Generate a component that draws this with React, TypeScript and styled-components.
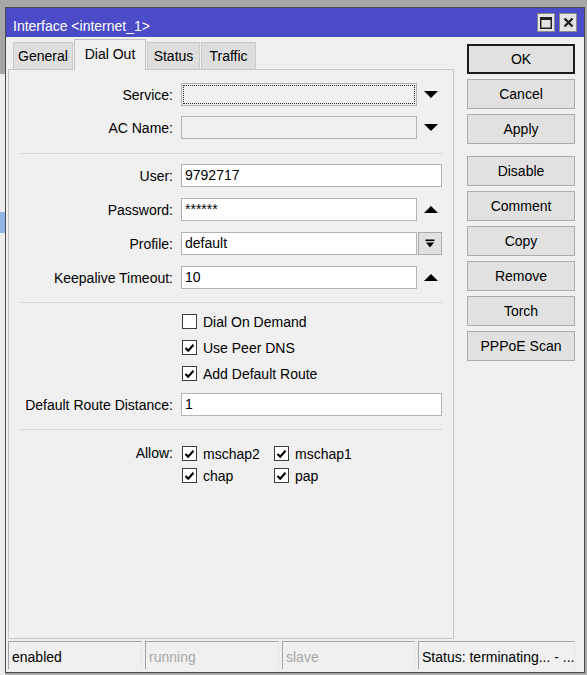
import React from 'react';
import styled, {createGlobalStyle, css} from 'styled-components';

const GlobalStyle = createGlobalStyle`
  html, body {
    margin: 0;
    padding: 0;
  }
  body {
    background: #a7a7a7;
    font-family: "Liberation Sans", Arial, sans-serif;
    font-size: 14px;
    color: #000;
  }
`;

const Page = styled.div`
  width: 587px;
  height: 675px;
  display: flex;
  align-items: flex-start;
  overflow: hidden;
`;

const Backdrop = styled.div`
  width: 5px;
  align-self: stretch;
  display: flex;
  flex-direction: column;
`;

const BackdropBlock = styled.div<{ $h: number; $bg: string }>`
  height: ${p => p.$h}px;
  background: ${p => p.$bg};
  flex-shrink: 0;
`;

const Window = styled.div`
  margin-top: 7px;
  width: 580px;
  height: 666px;
  box-sizing: border-box;
  border: 1px solid #4a4a4a;
  background: #f0f0f0;
  display: flex;
  flex-direction: column;
`;

const TitleBar = styled.div`
  height: 29px;
  flex-shrink: 0;
  background: #4b4bc7;
  display: flex;
  align-items: center;
  padding: 0 7px 0 7px;
  gap: 4px;
`;

const Title = styled.div`
  flex: 1;
  color: #fff;
  padding-top: 6px;
  white-space: nowrap;
`;

const CaptionButton = styled.div`
  width: 18px;
  height: 19px;
  box-sizing: border-box;
  background: #e4e4e4;
  border: 1px solid #8a8a8a;
  display: flex;
  align-items: center;
  justify-content: center;
`;

const Body = styled.div`
  flex: 1;
  display: grid;
  grid-template-columns: 446px 108px;
  grid-template-rows: 1fr 28px;
  column-gap: 13px;
  row-gap: 2px;
  padding: 2px 6px 3px 2px;
  min-height: 0;
`;

const LeftColumn = styled.div`
  display: flex;
  flex-direction: column;
  min-height: 0;
`;

const TabStrip = styled.div`
  height: 30px;
  display: flex;
  align-items: flex-end;
  gap: 1px;
  padding-left: 5px;
  flex-shrink: 0;
`;

const Tab = styled.div<{ $w: number; $active?: boolean }>`
  width: ${p => p.$w}px;
  height: 27px;
  box-sizing: border-box;
  display: flex;
  align-items: center;
  justify-content: center;
  background: #dedede;
  border: 1px solid #cacaca;
  border-bottom: none;
  ${p => p.$active && css`
    height: 31px;
    margin-bottom: -1px;
    background: #f0f0f0;
    border-color: #c2c2c2;
    padding-bottom: 3px;
    position: relative;
    z-index: 1;
  `}
`;

const Panel = styled.div`
  flex: 1;
  border: 1px solid #c8c8c8;
  background: #f0f0f0;
  padding-top: 13px;
  display: flex;
  flex-direction: column;
`;

const Group = styled.div<{ $gap: number }>`
  display: flex;
  flex-direction: column;
  gap: ${p => p.$gap}px;
`;

const Row = styled.div<{ $mt?: number }>`
  display: flex;
  align-items: center;
  height: 23px;
  margin-top: ${p => p.$mt ?? 0}px;
`;

const Label = styled.div`
  width: 164px;
  margin-right: 8px;
  text-align: right;
  white-space: nowrap;
`;

const TextBox = styled.div<{ $w: number; $muted?: boolean; $focused?: boolean }>`
  width: ${p => p.$w}px;
  height: 23px;
  box-sizing: border-box;
  border: 1px solid #b3b3b3;
  background: ${p => (p.$muted ? '#f0f0f0' : '#fff')};
  padding-left: 3px;
  line-height: 21px;
  white-space: nowrap;
  overflow: hidden;
  ${p => p.$focused && css`
    outline: 1px dotted #222;
    outline-offset: -3px;
  `}
`;

const ArrowSlot = styled.div`
  width: 25px;
  padding-left: 2px;
  box-sizing: border-box;
  display: flex;
  align-items: center;
  justify-content: center;
`;

const ComboButton = styled.div`
  width: 24px;
  height: 23px;
  margin-left: 1px;
  box-sizing: border-box;
  background: #e1e1e1;
  border: 1px solid #adadad;
  display: flex;
  align-items: center;
  justify-content: center;
`;

const Separator = styled.div<{ $mt: number; $mb: number }>`
  height: 1px;
  width: 422px;
  margin: ${p => p.$mt}px 0 ${p => p.$mb}px 11px;
  background: #d8d8d8;
`;

const CheckRow = styled.div`
  display: flex;
  align-items: center;
  height: 21px;
  padding-left: 173px;
`;

const CheckItem = styled.div`
  display: flex;
  align-items: center;
  gap: 6px;
  height: 21px;
  white-space: nowrap;
`;

const Box = styled.div`
  width: 15px;
  height: 15px;
  box-sizing: border-box;
  border: 1px solid #3c3c3c;
  background: #fff;
  display: flex;
  align-items: center;
  justify-content: center;
  flex-shrink: 0;
`;

const AllowRow = styled.div`
  display: flex;
  align-items: flex-start;
`;

const AllowLabel = styled(Label)`
  height: 21px;
  line-height: 21px;
`;

const AllowGrid = styled.div`
  display: grid;
  grid-template-columns: 92px auto;
  row-gap: 1px;
  margin-left: 1px;
`;

const ButtonColumn = styled.div`
  display: flex;
  flex-direction: column;
  gap: 5px;
  padding-top: 5px;
`;

const Button = styled.div<{ $primary?: boolean; $spaced?: boolean }>`
  height: 30px;
  box-sizing: border-box;
  background: #e1e1e1;
  border: 1px solid #adadad;
  display: flex;
  align-items: center;
  justify-content: center;
  white-space: nowrap;
  margin-top: ${p => (p.$spaced ? 7 : 0)}px;
  ${p => p.$primary && css`
    border-color: #1c1c1c;
    box-shadow: inset 0 0 0 1px #1c1c1c;
  `}
`;

const StatusBar = styled.div`
  grid-column: 1 / -1;
  display: flex;
  gap: 3px;
`;

const StatusCell = styled.div<{ $w?: number; $dim?: boolean }>`
  ${p => (p.$w ? css`width: ${p.$w}px;` : css`flex: 1;`)}
  box-sizing: border-box;
  border-top: 1px solid #a3a3a3;
  border-left: 1px solid #a3a3a3;
  border-right: 1px solid #e6e6e6;
  padding: 3px 0 0 3px;
  display: flex;
  align-items: center;
  white-space: nowrap;
  overflow: hidden;
  color: ${p => (p.$dim ? '#a8a8a8' : '#000')};
`;

const DownArrow = () => (
  <svg width="14" height="8" viewBox="0 0 14 8">
    <polygon points="0,0 14,0 7,7" fill="#000"/>
  </svg>
);

const UpArrow = () => (
  <svg width="14" height="8" viewBox="0 0 14 8">
    <polygon points="0,7 14,7 7,0" fill="#000"/>
  </svg>
);

const DropIcon = () => (
  <svg width="10" height="10" viewBox="0 0 10 10">
    <rect x="0.5" y="0.5" width="9" height="1.6" fill="#000"/>
    <polygon points="1,3.6 9,3.6 5,8.6" fill="#000"/>
  </svg>
);

const CheckMark = () => (
  <svg width="11" height="10" viewBox="0 0 11 10">
    <polyline points="1.5,5 4.2,7.8 9.5,1.8" fill="none" stroke="#000" strokeWidth="2.1"/>
  </svg>
);

const Check = ({label, checked}: { label: string; checked?: boolean }) => (
  <CheckItem>
    <Box>{checked && <CheckMark/>}</Box>
    <span>{label}</span>
  </CheckItem>
);

const buttons = ['OK', 'Cancel', 'Apply', 'Disable', 'Comment', 'Copy', 'Remove', 'Torch', 'PPPoE Scan'];

export default function App() {
  return (
    <>
      <GlobalStyle/>
      <Page>
        <Backdrop>
          <BackdropBlock $h={74} $bg="#a7a7a7"/>
          <BackdropBlock $h={138} $bg="#ededed"/>
          <BackdropBlock $h={21} $bg="#8fb6e6"/>
          <BackdropBlock $h={442} $bg="#ededed"/>
        </Backdrop>
        <Window>
          <TitleBar>
            <Title>Interface &lt;internet_1&gt;</Title>
            <CaptionButton>
              <svg width="12" height="12" viewBox="0 0 12 12">
                <rect x="0.75" y="0.75" width="10.5" height="10.5" fill="none" stroke="#222" strokeWidth="1.5"/>
                <rect x="0" y="0" width="12" height="3" fill="#222"/>
              </svg>
            </CaptionButton>
            <CaptionButton>
              <svg width="11" height="11" viewBox="0 0 11 11">
                <path d="M1.5 1.5 L9.5 9.5 M9.5 1.5 L1.5 9.5" stroke="#222" strokeWidth="2.4"/>
              </svg>
            </CaptionButton>
          </TitleBar>
          <Body>
            <LeftColumn>
              <TabStrip>
                <Tab $w={60}>General</Tab>
                <Tab $w={72} $active>Dial Out</Tab>
                <Tab $w={53}>Status</Tab>
                <Tab $w={55}>Traffic</Tab>
              </TabStrip>
              <Panel>
                <Group $gap={10}>
                  <Row>
                    <Label>Service:</Label>
                    <TextBox $w={236} $muted $focused/>
                    <ArrowSlot><DownArrow/></ArrowSlot>
                  </Row>
                  <Row>
                    <Label>AC Name:</Label>
                    <TextBox $w={236} $muted/>
                    <ArrowSlot><DownArrow/></ArrowSlot>
                  </Row>
                </Group>
                <Separator $mt={14} $mb={10}/>
                <Group $gap={11}>
                  <Row>
                    <Label>User:</Label>
                    <TextBox $w={261}>9792717</TextBox>
                  </Row>
                  <Row>
                    <Label>Password:</Label>
                    <TextBox $w={236}>******</TextBox>
                    <ArrowSlot><UpArrow/></ArrowSlot>
                  </Row>
                  <Row>
                    <Label>Profile:</Label>
                    <TextBox $w={236}>default</TextBox>
                    <ComboButton><DropIcon/></ComboButton>
                  </Row>
                  <Row>
                    <Label>Keepalive Timeout:</Label>
                    <TextBox $w={236}>10</TextBox>
                    <ArrowSlot><UpArrow/></ArrowSlot>
                  </Row>
                </Group>
                <Separator $mt={13} $mb={8}/>
                <Group $gap={5}>
                  <CheckRow><Check label="Dial On Demand"/></CheckRow>
                  <CheckRow><Check label="Use Peer DNS" checked/></CheckRow>
                  <CheckRow><Check label="Add Default Route" checked/></CheckRow>
                </Group>
                <Row $mt={9}>
                  <Label>Default Route Distance:</Label>
                  <TextBox $w={261}>1</TextBox>
                </Row>
                <Separator $mt={13} $mb={13}/>
                <AllowRow>
                  <AllowLabel>Allow:</AllowLabel>
                  <AllowGrid>
                    <Check label="mschap2" checked/>
                    <Check label="mschap1" checked/>
                    <Check label="chap" checked/>
                    <Check label="pap" checked/>
                  </AllowGrid>
                </AllowRow>
              </Panel>
            </LeftColumn>
            <ButtonColumn>
              {buttons.map(b => (
                <Button key={b} $primary={b === 'OK'} $spaced={b === 'Disable'}>{b}</Button>
              ))}
            </ButtonColumn>
            <StatusBar>
              <StatusCell $w={134}>enabled</StatusCell>
              <StatusCell $w={134} $dim>running</StatusCell>
              <StatusCell $w={133} $dim>slave</StatusCell>
              <StatusCell>Status: terminating... - ...</StatusCell>
            </StatusBar>
          </Body>
        </Window>
      </Page>
    </>
  );
}
